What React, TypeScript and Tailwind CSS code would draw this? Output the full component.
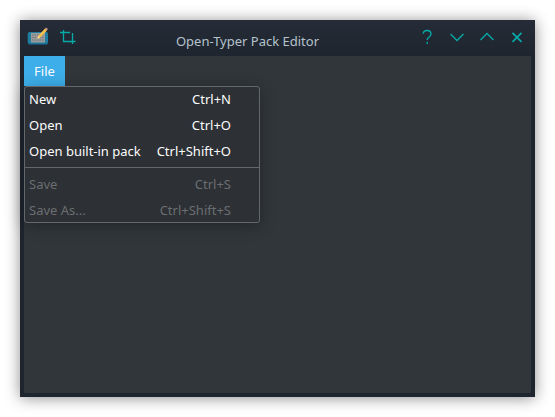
import type { ReactNode } from "react";

type Item = { label: string; shortcut: string };

const packItems: Item[] = [
  { label: "New", shortcut: "Ctrl+N" },
  { label: "Open", shortcut: "Ctrl+O" },
  { label: "Open built-in pack", shortcut: "Ctrl+Shift+O" },
];

const saveItems: Item[] = [
  { label: "Save", shortcut: "Ctrl+S" },
  { label: "Save As...", shortcut: "Ctrl+Shift+S" },
];

function MenuItem({ item, disabled }: { item: Item; disabled?: boolean }) {
  return (
    <button
      disabled={disabled}
      className={`flex h-[26px] w-full items-center justify-between pl-1 pr-7 whitespace-nowrap ${
        disabled ? "text-[#6a6e71]" : "text-[#fcfcfc]"
      }`}
    >
      <span>{item.label}</span>
      <span>{item.shortcut}</span>
    </button>
  );
}

function Glyph({ children }: { children: ReactNode }) {
  return (
    <svg width="16" height="16" viewBox="0 0 16 16" fill="none" stroke="#06aaa8" strokeWidth="1.3">
      {children}
    </svg>
  );
}

function AppIcon() {
  return (
    <svg width="22" height="20" viewBox="0 0 22 20">
      <rect x="0.8" y="5.5" width="20.2" height="12.2" rx="1.8" fill="#185b78" />
      <rect x="0.8" y="5" width="20.2" height="11.8" rx="1.8" fill="#217da0" />
      <rect x="4" y="6" width="14" height="9.5" fill="#989b9c" />
      <path d="M5 8h12M5 10.5h12M5 13h12" stroke="#6f7476" strokeWidth="1" strokeDasharray="1.5 1" />
      <path d="M10.2 11.8l1.1-3L18 1.6l2 1.8-6.8 7.2z" fill="#f8c24a" />
      <path d="M18 1.6l.8-.8c.6-.5 2.2.8 1.8 1.6l-.7 1z" fill="#d09a94" />
      <path d="M10.2 11.8l1.1-3 1.9 1.8z" fill="#f7d795" />
    </svg>
  );
}

function TitleBar() {
  return (
    <header className="grid h-9 grid-cols-[96px_1fr_156px] bg-linear-to-b from-[#252c37] to-[#1e252f]">
      <div className="flex items-start gap-[11px] pt-[7px] pl-[7px]">
        <AppIcon />
        <div className="pt-[3px]">
          <Glyph>
            <path d="M3.5 0v11.5h12M0 2.5h10M12.5 3v11" />
          </Glyph>
        </div>
      </div>
      <h1 className="pt-3 text-center leading-[18px] whitespace-nowrap text-[#b5c3cc]">
        Open-Typer Pack Editor
      </h1>
      <div className="flex items-start justify-end gap-[14px] pt-[9px] pr-[10px]">
        <Glyph>
          <path d="M4.2 4.8C4.2 2.4 5.7 1.5 8 1.5s4 1.3 4 3.6c0 3-3.8 2.7-3.8 5.9M8.2 12.7v2.3" />
        </Glyph>
        <Glyph>
          <path d="M1.5 5L8 11.5 14.5 5" />
        </Glyph>
        <Glyph>
          <path d="M1.5 11L8 4.5 14.5 11" />
        </Glyph>
        <Glyph>
          <path d="M3.5 3.8l9 9M12.5 3.8l-9 9" strokeWidth="1.7" />
        </Glyph>
      </div>
    </header>
  );
}

export default function App() {
  return (
    <div className="h-[417px] w-[555px] overflow-hidden bg-white p-5 font-['Noto_Sans',sans-serif] text-[13px]">
      <div className="flex h-[377px] w-[515px] flex-col overflow-visible rounded-t-[1px] bg-[#1e252f] shadow-[0_1px_15px_rgba(0,0,0,0.45)]">
        <TitleBar />
        <main className="mx-1 mb-1 flex-1 bg-[#31363a]">
          <button className="flex h-[30px] w-[41px] items-center justify-center bg-[#3daee9] pt-[2px] text-[#fcfcfc]">
            File
          </button>
          <div className="h-[137px] w-[236px] rounded-[3px] border border-[#65686b] bg-[#2d3035] shadow-[0_3px_16px_rgba(0,0,0,0.3)]">
            {packItems.map((item) => (
              <MenuItem key={item.label} item={item} />
            ))}
            <div className="mt-[2px] mb-1 h-px bg-[#65686b]" />
            {saveItems.map((item) => (
              <MenuItem key={item.label} item={item} disabled />
            ))}
          </div>
        </main>
      </div>
    </div>
  );
}
